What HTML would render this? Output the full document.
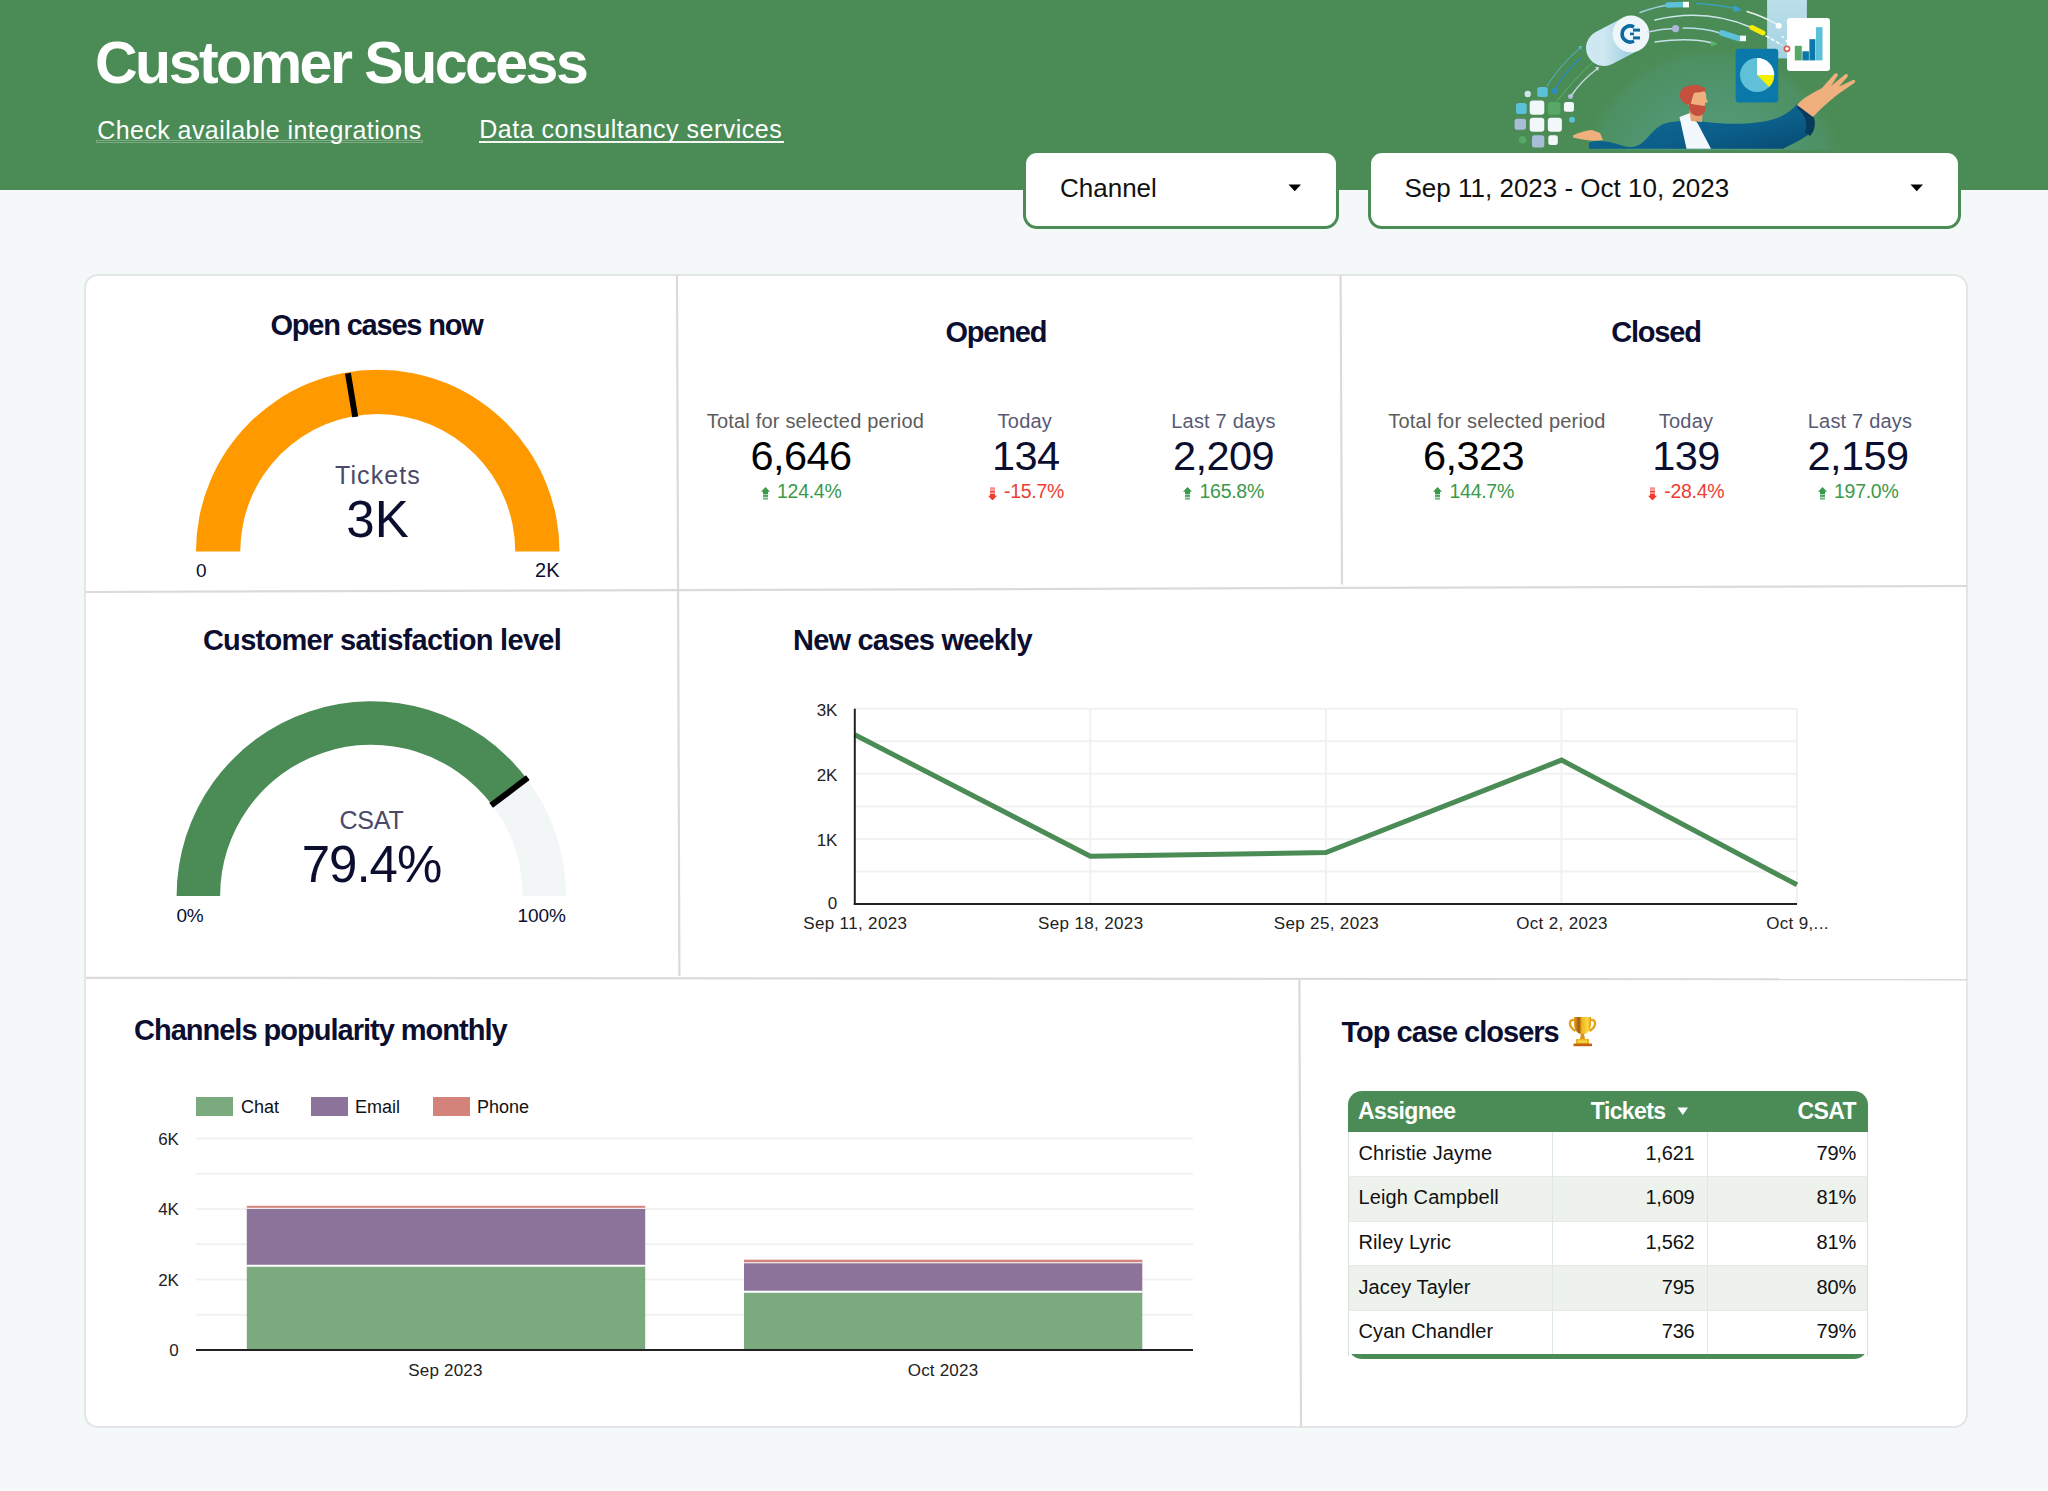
<!DOCTYPE html>
<html><head><meta charset="utf-8"><title>Customer Success</title>
<style>
html,body{margin:0;padding:0;}
body{width:2048px;height:1491px;position:relative;overflow:hidden;background:#f5f8f9;font-family:"Liberation Sans", sans-serif;}
.t{position:absolute;white-space:nowrap;line-height:1;}
</style></head><body>
<div style="position:absolute;left:0;top:0;width:2048px;height:190px;background:#4b8c56"></div>
<div class="t" style="left:95.0px;top:34.3px;font-size:59px;font-weight:700;color:#fff;letter-spacing:-2.5px;">Customer Success</div>
<div class="t" style="left:97.3px;top:117.6px;font-size:25px;color:#fff;letter-spacing:0.42px;">Check available integrations</div>
<div style="position:absolute;left:96px;top:139.8px;width:327px;height:3px;box-sizing:border-box;border:1px solid rgba(255,255,255,0.28)"></div>
<div class="t" style="left:479.3px;top:117.4px;font-size:25px;color:#fff;letter-spacing:0.5px;">Data consultancy services</div>
<div style="position:absolute;left:479px;top:140.5px;width:305px;height:2px;background:#f4f6f4"></div>
<svg style="position:absolute;left:0;top:0" width="2048" height="190" viewBox="0 0 2048 190">
<defs>
<radialGradient id="glow" cx="0.5" cy="0.5" r="0.5">
<stop offset="0" stop-color="#58a383" stop-opacity="0.95"/>
<stop offset="0.6" stop-color="#52997a" stop-opacity="0.7"/>
<stop offset="0.9" stop-color="#4f9470" stop-opacity="0.45"/>
<stop offset="1" stop-color="#4b8c56" stop-opacity="0"/>
</radialGradient>
<linearGradient id="jk" x1="0" y1="0" x2="1" y2="1">
<stop offset="0" stop-color="#0f6d98"/><stop offset="0.6" stop-color="#0b5f8a"/><stop offset="1" stop-color="#084a72"/>
</linearGradient>
<linearGradient id="cyl" x1="0" y1="0" x2="1" y2="0">
<stop offset="0" stop-color="#cfe7f0"/><stop offset="1" stop-color="#a6d3e3"/>
</linearGradient>
<linearGradient id="tall" x1="0" y1="0" x2="0" y2="1">
<stop offset="0" stop-color="#bde0ea"/><stop offset="1" stop-color="#a3d2e2"/>
</linearGradient>
</defs>
<circle cx="1712" cy="178" r="134" fill="url(#glow)"/>
<!-- squares -->
<g>
<circle cx="1527.7" cy="94" r="3.2" fill="#cfe3ea"/>
<rect x="1537.2" y="87" width="10.6" height="10" rx="2.5" fill="#5bc0d8"/>
<circle cx="1554.8" cy="91" r="3" fill="#2a8cc0"/>
<circle cx="1570.4" cy="96.6" r="2.5" fill="#aab8d6"/>
<rect x="1516" y="103" width="10.7" height="11" rx="2.5" fill="#5bc0d8"/>
<rect x="1529.7" y="100.6" width="14.6" height="14.1" rx="3" fill="#f2f7f9"/>
<rect x="1547.8" y="102" width="12.6" height="12.7" rx="3" fill="#57a866"/>
<rect x="1563.9" y="102" width="10.1" height="9.7" rx="2.5" fill="#f2f7f9"/>
<rect x="1514.6" y="118.7" width="11.4" height="11.1" rx="2.5" fill="#a9bcd8"/>
<rect x="1529.7" y="117.7" width="14.6" height="14.1" rx="3" fill="#f2f7f9"/>
<rect x="1547.8" y="117.7" width="14.1" height="14.1" rx="3" fill="#f2f7f9"/>
<circle cx="1572" cy="119.7" r="3" fill="#5bc0d8"/>
<circle cx="1522.6" cy="139.8" r="3.8" fill="#57a866"/>
<rect x="1532" y="135.3" width="12.3" height="12.1" rx="2.5" fill="#a9bcd8"/>
<rect x="1548.3" y="135.3" width="9.5" height="9.6" rx="2.5" fill="#f2f7f9"/>
</g>
<!-- left arcs -->
<g fill="none" stroke-linecap="round">
<path d="M1547 86 Q1560 65 1580 48" stroke="#5ab5c8" stroke-width="1"/>
<path d="M1556 88 Q1566 70 1581 58" stroke="#2a8cc0" stroke-width="1.5"/>
<path d="M1557 101 Q1575 78 1596 59" stroke="#5db36a" stroke-width="1"/>
<path d="M1571 96 Q1582 80 1597 69" stroke="#c8d6e0" stroke-width="1.5"/>
</g>
<path d="M1578 46 L1582 46 L1581 50 Z" fill="#5ab5c8"/>
<path d="M1595 67 L1599 67 L1598 71 Z" fill="#c8d6e0"/>
<!-- cylinder -->
<line x1="1604" y1="48" x2="1627" y2="36" stroke="url(#cyl)" stroke-width="36" stroke-linecap="round"/>
<circle cx="1631" cy="34" r="18.4" fill="#eef6f9"/>
<path d="M1634 27 A8 8 0 1 0 1634 41" fill="none" stroke="#0a6aa1" stroke-width="3.6"/>
<rect x="1633" y="28.6" width="7" height="3" fill="#0a6aa1"/>
<rect x="1633" y="36.4" width="7" height="3" fill="#0a6aa1"/>
<rect x="1630" y="32.6" width="4" height="2.6" fill="#0a6aa1"/>
<!-- tall light rect -->
<rect x="1767.1" y="-3" width="39.8" height="61.4" fill="url(#tall)"/>
<!-- right flow lines -->
<g fill="none" stroke-linecap="round">
<path d="M1640 12.5 Q1655 7 1668 5" stroke="#9fd0e0" stroke-width="1.5"/>
<path d="M1697 3.5 Q1720 5 1738 9" stroke="#3aa0c8" stroke-width="1.5" stroke-dasharray="3 1.5"/>
<path d="M1655 20 Q1705 8 1750 27" stroke="#d0e6ee" stroke-width="1.5"/>
<path d="M1766 36 L1782 45" stroke="#ffffff" stroke-width="1.5" stroke-dasharray="3 3"/>
<path d="M1648 32 Q1662 29 1674 28.6" stroke="#c0d8e4" stroke-width="1.5"/>
<path d="M1683 28 Q1705 28 1720 33" stroke="#b8dce8" stroke-width="1.5"/>
<path d="M1655 42 Q1690 37 1712 43" stroke="#c6e3ec" stroke-width="1.5"/>
<path d="M1747 11.5 Q1765 17 1778 25" stroke="#e8f2f4" stroke-width="1.5"/>
</g>
<line x1="1668" y1="5" x2="1683" y2="4.5" stroke="#5bc0d8" stroke-width="5.5" stroke-linecap="round"/>
<rect x="1683" y="1.8" width="6" height="5.6" fill="#fff"/>
<path d="M1734 5 L1742 10 L1733 12 Z" fill="#3aa0c8"/>
<line x1="1752" y1="27.5" x2="1763" y2="33" stroke="#f5ef00" stroke-width="5" stroke-linecap="round"/>
<circle cx="1675.6" cy="28.6" r="3.6" fill="#aab8d6"/>
<line x1="1722" y1="33" x2="1739" y2="38.5" stroke="#5bc0d8" stroke-width="6" stroke-linecap="round"/>
<rect x="1740" y="35.6" width="6" height="5.6" fill="#f2f7f9"/>
<path d="M1711 40.5 L1718 44 L1711 46.5 Z" fill="#5db36a"/>
<circle cx="1778.7" cy="25.7" r="3" fill="#fff"/>
<path d="M1782 36 L1790 45" stroke="#ffffff" stroke-width="1.5" stroke-dasharray="2.5 3"/>
<!-- bar card -->
<rect x="1787" y="17.9" width="43" height="53" rx="3" fill="#fff"/>
<rect x="1794.8" y="45.8" width="7" height="14.6" fill="#57a866"/>
<rect x="1802.4" y="51.3" width="6.5" height="9.1" fill="#0a78a8"/>
<rect x="1809.4" y="39.2" width="6" height="21.2" fill="#0a78a8"/>
<rect x="1816" y="27.2" width="6.5" height="33.2" fill="#5bc0d8"/>
<circle cx="1787" cy="48.8" r="2.6" fill="#fff" stroke="#e05a4a" stroke-width="1.6"/>
<!-- pie card -->
<rect x="1735.7" y="48.8" width="42.5" height="53.8" rx="3" fill="#0a78a8"/>
<circle cx="1757.1" cy="75" r="17.1" fill="#5fc0d8"/>
<path d="M1757.1 75 L1757.1 57.9 A17.1 17.1 0 0 1 1774.2 75 Z" fill="#fff"/>
<path d="M1757.1 75 L1774.2 75 A17.1 17.1 0 0 1 1769.2 87.1 Z" fill="#f5ef00"/>
<!-- man -->
<path d="M1573 135.5 C1580 132 1586 130.5 1592 130 L1600 133 L1603 140 C1595 141.5 1584 140.5 1573 137.5 Z" fill="#f0b07e"/>
<path d="M1589 142.5 C1598 139.5 1610 141.5 1622 145.5 C1629 147.8 1636 147.8 1642 143 C1650 136 1655 127 1665 123.5 C1675 120.5 1692 120 1706 122 C1730 125 1760 125 1781 116.5 C1788 113 1794 108 1797 104 L1812 114 C1816 121 1815 129 1809 134 C1800 141 1790 145 1783 148.8 L1589 148.8 Z" fill="url(#jk)"/>
<path d="M1799 103.5 C1806 108 1812 112 1814 118 C1816 125 1814 132 1810 136 L1805 132 C1808 125 1806 115 1797 108 Z" fill="#083a5c"/>
<path d="M1797 105 C1805 96 1815 92 1822 88 L1834 74.5 C1836 72.5 1838.5 73 1837.5 76 L1831 86 L1845 74.5 C1847 73 1849 75 1847 77.5 L1839 86.5 L1853 80 C1855.5 79.5 1856 82 1853.5 83.5 C1841 92 1829 100 1813 117 Z" fill="#f0b07e"/>
<path d="M1679.5 117 L1690 113 L1698 124 L1711 148.8 L1686.5 148.8 Z" fill="#f2f8fb"/>
<path d="M1689 109 L1703 109 L1702 122 L1691 121 Z" fill="#e4a273"/>
<path d="M1687 97 C1688 90 1694 88 1700 89 C1705 90 1707 94 1706 98 L1708 102 L1705 103 C1705 108 1702 112 1697 112 C1691 112 1686 104 1687 96 Z" fill="#f0b07e"/>
<path d="M1680 97 C1679 90 1684 86 1691 85.5 C1695 84 1700 85 1702 87 C1705 87 1706 89 1705 91 C1702 92 1698 92.5 1694 93 C1693 96 1692 99 1690.5 105 C1686 105 1681 102 1680 97 Z" fill="#c4503d"/>
<path d="M1689 103 C1693 105 1699 104.5 1705.5 106.5 C1706 111 1704 115.5 1698 116 C1692 116 1688 111 1689 103 Z" fill="#c4503d"/>
<circle cx="1701" cy="126" r="1.1" fill="#0a6aa1"/>
</svg>

<div style="position:absolute;left:1023px;top:149.5px;width:316px;height:79px;box-sizing:border-box;border:3px solid #4b8c56;border-radius:14px;background:#fff"></div>
<div class="t" style="left:1060.0px;top:175.3px;font-size:26px;color:#111;">Channel</div>
<svg style="position:absolute;left:1288px;top:184px" width="14" height="8"><path d="M0.5 0.5 H13 L6.75 7.2 Z" fill="#000"/></svg>
<div style="position:absolute;left:1368px;top:149.5px;width:593px;height:79px;box-sizing:border-box;border:3px solid #4b8c56;border-radius:14px;background:#fff"></div>
<div class="t" style="left:1404.5px;top:175.3px;font-size:26px;color:#111;">Sep 11, 2023 - Oct 10, 2023</div>
<svg style="position:absolute;left:1910px;top:184px" width="14" height="8"><path d="M0.5 0.5 H13 L6.75 7.2 Z" fill="#000"/></svg>
<div style="position:absolute;left:84px;top:274px;width:1884px;height:1154px;box-sizing:border-box;border:2px solid #e3e5e6;border-radius:14px;background:#fff"></div>
<svg style="position:absolute;left:0;top:0" width="2048" height="1491"><g stroke="#dadada" stroke-width="2.2"><line x1="677" y1="275" x2="679.4" y2="976"/><line x1="1340.6" y1="275" x2="1342" y2="584.5"/><line x1="86" y1="592" x2="1967" y2="586"/><line x1="86" y1="977.8" x2="1967" y2="979.4"/><line x1="1299.4" y1="979" x2="1301" y2="1427"/></g></svg>
<svg style="position:absolute;left:0;top:0" width="700" height="600"><path d="M196.00 551.50 A181.75 181.75 0 0 1 559.50 551.50 L515.25 551.50 A137.5 137.5 0 0 0 240.25 551.50 Z" fill="#ff9900"/><line x1="355.22" y1="416.87" x2="347.92" y2="373.23" stroke="#000" stroke-width="6"/></svg>
<div class="t" style="left:-223.5px;width:1200px;text-align:center;top:311.1px;font-size:29px;font-weight:700;color:#0b0e2f;letter-spacing:-1.2px;">Open cases now</div>
<div class="t" style="left:-222.0px;width:1200px;text-align:center;top:462.8px;font-size:25px;color:#4a4a68;letter-spacing:1.1px;">Tickets</div>
<div class="t" style="left:-222.5px;width:1200px;text-align:center;top:493.6px;font-size:51px;color:#0b0e2f;">3K</div>
<div class="t" style="left:196.0px;top:560.7px;font-size:19px;color:#0b0e2f;">0</div>
<div class="t" style="left:-640.5px;width:1200px;text-align:right;top:559.9px;font-size:20px;color:#0b0e2f;">2K</div>
<div class="t" style="left:395.8px;width:1200px;text-align:center;top:317.6px;font-size:29px;font-weight:700;color:#0b0e2f;letter-spacing:-1.2px;">Opened</div>
<div class="t" style="left:215.4px;width:1200px;text-align:center;top:411.3px;font-size:20px;color:#5c5c5c;letter-spacing:0.2px;">Total for selected period</div>
<div class="t" style="left:201.0px;width:1200px;text-align:center;top:435.3px;font-size:41.5px;color:#000;letter-spacing:-0.6px;">6,646</div>
<div class="t" style="left:201px;width:1200px;text-align:center;top:482.0px;font-size:19.5px;color:#3a9a4a;letter-spacing:-0.3px"><svg width="9" height="13.6" style="vertical-align:-2.2px;fill:#3a9a4a"><path d="M4.5 0 L9 4.8 H7 V6.9 H2 V4.8 H0 Z"/><rect x="2" y="6.9" width="5" height="1.20" fill-opacity="0.4"/><rect x="2" y="8.1" width="5" height="1.70" fill-opacity="1.0"/><rect x="2" y="9.8" width="5" height="1.30" fill-opacity="0.3"/><rect x="2" y="11.1" width="5" height="1.10" fill-opacity="0.8"/><rect x="2" y="12.2" width="5" height="1.40" fill-opacity="0.4"/></svg><span style="margin-left:7.5px">124.4%</span></div>
<div class="t" style="left:424.8px;width:1200px;text-align:center;top:411.3px;font-size:20px;color:#575a74;letter-spacing:0.2px;">Today</div>
<div class="t" style="left:425.8px;width:1200px;text-align:center;top:435.3px;font-size:41.5px;color:#0b0e2f;letter-spacing:-0.6px;">134</div>
<div class="t" style="left:425.79999999999995px;width:1200px;text-align:center;top:482.0px;font-size:19.5px;color:#ee3d31;letter-spacing:-0.3px"><svg width="9" height="13.6" style="vertical-align:-2.2px;fill:#ee3d31"><g transform="translate(0,13.6) scale(1,-1)"><path d="M4.5 0 L9 4.8 H7 V6.9 H2 V4.8 H0 Z"/><rect x="2" y="6.9" width="5" height="1.20" fill-opacity="0.4"/><rect x="2" y="8.1" width="5" height="1.70" fill-opacity="1.0"/><rect x="2" y="9.8" width="5" height="1.30" fill-opacity="0.3"/><rect x="2" y="11.1" width="5" height="1.10" fill-opacity="0.8"/><rect x="2" y="12.2" width="5" height="1.40" fill-opacity="0.4"/></g></svg><span style="margin-left:7.5px">-15.7%</span></div>
<div class="t" style="left:623.5px;width:1200px;text-align:center;top:411.3px;font-size:20px;color:#575a74;letter-spacing:0.2px;">Last 7 days</div>
<div class="t" style="left:623.5px;width:1200px;text-align:center;top:435.3px;font-size:41.5px;color:#0b0e2f;letter-spacing:-0.6px;">2,209</div>
<div class="t" style="left:623.5px;width:1200px;text-align:center;top:482.0px;font-size:19.5px;color:#3a9a4a;letter-spacing:-0.3px"><svg width="9" height="13.6" style="vertical-align:-2.2px;fill:#3a9a4a"><path d="M4.5 0 L9 4.8 H7 V6.9 H2 V4.8 H0 Z"/><rect x="2" y="6.9" width="5" height="1.20" fill-opacity="0.4"/><rect x="2" y="8.1" width="5" height="1.70" fill-opacity="1.0"/><rect x="2" y="9.8" width="5" height="1.30" fill-opacity="0.3"/><rect x="2" y="11.1" width="5" height="1.10" fill-opacity="0.8"/><rect x="2" y="12.2" width="5" height="1.40" fill-opacity="0.4"/></svg><span style="margin-left:7.5px">165.8%</span></div>
<div class="t" style="left:1056.0px;width:1200px;text-align:center;top:317.6px;font-size:29px;font-weight:700;color:#0b0e2f;letter-spacing:-1.2px;">Closed</div>
<div class="t" style="left:897.0px;width:1200px;text-align:center;top:411.3px;font-size:20px;color:#5c5c5c;letter-spacing:0.2px;">Total for selected period</div>
<div class="t" style="left:873.5px;width:1200px;text-align:center;top:435.3px;font-size:41.5px;color:#000;letter-spacing:-0.6px;">6,323</div>
<div class="t" style="left:873.5px;width:1200px;text-align:center;top:482.0px;font-size:19.5px;color:#3a9a4a;letter-spacing:-0.3px"><svg width="9" height="13.6" style="vertical-align:-2.2px;fill:#3a9a4a"><path d="M4.5 0 L9 4.8 H7 V6.9 H2 V4.8 H0 Z"/><rect x="2" y="6.9" width="5" height="1.20" fill-opacity="0.4"/><rect x="2" y="8.1" width="5" height="1.70" fill-opacity="1.0"/><rect x="2" y="9.8" width="5" height="1.30" fill-opacity="0.3"/><rect x="2" y="11.1" width="5" height="1.10" fill-opacity="0.8"/><rect x="2" y="12.2" width="5" height="1.40" fill-opacity="0.4"/></svg><span style="margin-left:7.5px">144.7%</span></div>
<div class="t" style="left:1086.0px;width:1200px;text-align:center;top:411.3px;font-size:20px;color:#575a74;letter-spacing:0.2px;">Today</div>
<div class="t" style="left:1086.0px;width:1200px;text-align:center;top:435.3px;font-size:41.5px;color:#0b0e2f;letter-spacing:-0.6px;">139</div>
<div class="t" style="left:1086px;width:1200px;text-align:center;top:482.0px;font-size:19.5px;color:#ee3d31;letter-spacing:-0.3px"><svg width="9" height="13.6" style="vertical-align:-2.2px;fill:#ee3d31"><g transform="translate(0,13.6) scale(1,-1)"><path d="M4.5 0 L9 4.8 H7 V6.9 H2 V4.8 H0 Z"/><rect x="2" y="6.9" width="5" height="1.20" fill-opacity="0.4"/><rect x="2" y="8.1" width="5" height="1.70" fill-opacity="1.0"/><rect x="2" y="9.8" width="5" height="1.30" fill-opacity="0.3"/><rect x="2" y="11.1" width="5" height="1.10" fill-opacity="0.8"/><rect x="2" y="12.2" width="5" height="1.40" fill-opacity="0.4"/></g></svg><span style="margin-left:7.5px">-28.4%</span></div>
<div class="t" style="left:1260.0px;width:1200px;text-align:center;top:411.3px;font-size:20px;color:#575a74;letter-spacing:0.2px;">Last 7 days</div>
<div class="t" style="left:1258.0px;width:1200px;text-align:center;top:435.3px;font-size:41.5px;color:#0b0e2f;letter-spacing:-0.6px;">2,159</div>
<div class="t" style="left:1258px;width:1200px;text-align:center;top:482.0px;font-size:19.5px;color:#3a9a4a;letter-spacing:-0.3px"><svg width="9" height="13.6" style="vertical-align:-2.2px;fill:#3a9a4a"><path d="M4.5 0 L9 4.8 H7 V6.9 H2 V4.8 H0 Z"/><rect x="2" y="6.9" width="5" height="1.20" fill-opacity="0.4"/><rect x="2" y="8.1" width="5" height="1.70" fill-opacity="1.0"/><rect x="2" y="9.8" width="5" height="1.30" fill-opacity="0.3"/><rect x="2" y="11.1" width="5" height="1.10" fill-opacity="0.8"/><rect x="2" y="12.2" width="5" height="1.40" fill-opacity="0.4"/></svg><span style="margin-left:7.5px">197.0%</span></div>
<svg style="position:absolute;left:0;top:0" width="700" height="1000"><path d="M176.60 896.00 A194.7 194.7 0 0 1 526.63 778.61 L491.93 804.84 A151.2 151.2 0 0 0 220.10 896.00 Z" fill="#4b8c56"/><path d="M526.63 778.61 A194.7 194.7 0 0 1 566.00 896.00 L522.50 896.00 A151.2 151.2 0 0 0 491.93 804.84 Z" fill="#f3f6f7"/><line x1="491.13" y1="805.44" x2="527.83" y2="777.71" stroke="#000" stroke-width="6"/></svg>
<div class="t" style="left:-218.0px;width:1200px;text-align:center;top:626.4px;font-size:29px;font-weight:700;color:#0b0e2f;letter-spacing:-0.7px;">Customer satisfaction level</div>
<div class="t" style="left:-228.5px;width:1200px;text-align:center;top:807.8px;font-size:25px;color:#4a4a68;letter-spacing:-0.2px;">CSAT</div>
<div class="t" style="left:-228.5px;width:1200px;text-align:center;top:838.6px;font-size:51px;color:#0b0e2f;letter-spacing:-1.0px;">79.4%</div>
<div class="t" style="left:176.5px;top:905.9px;font-size:19px;color:#0b0e2f;letter-spacing:-0.3px;">0%</div>
<div class="t" style="left:-634.0px;width:1200px;text-align:right;top:905.9px;font-size:19px;color:#0b0e2f;">100%</div>
<svg style="position:absolute;left:0;top:0" width="2048" height="1000"><line x1="854.8" y1="871.5" x2="1797" y2="871.5" stroke="#f1f1f1" stroke-width="2"/><line x1="854.8" y1="838.9" x2="1797" y2="838.9" stroke="#f1f1f1" stroke-width="2"/><line x1="854.8" y1="806.4" x2="1797" y2="806.4" stroke="#f1f1f1" stroke-width="2"/><line x1="854.8" y1="773.8" x2="1797" y2="773.8" stroke="#f1f1f1" stroke-width="2"/><line x1="854.8" y1="741.2" x2="1797" y2="741.2" stroke="#f1f1f1" stroke-width="2"/><line x1="854.8" y1="708.7" x2="1797" y2="708.7" stroke="#f1f1f1" stroke-width="2"/><line x1="1090.3" y1="708.7" x2="1090.3" y2="904" stroke="#f1f1f1" stroke-width="2"/><line x1="1325.9" y1="708.7" x2="1325.9" y2="904" stroke="#f1f1f1" stroke-width="2"/><line x1="1561.5" y1="708.7" x2="1561.5" y2="904" stroke="#f1f1f1" stroke-width="2"/><line x1="1797.0" y1="708.7" x2="1797.0" y2="904" stroke="#f1f1f1" stroke-width="2"/><polyline points="854.8,734.7 1090.3,856.2 1325.9,852.6 1561.5,760.1 1797.0,884.8" fill="none" stroke="#4b8c56" stroke-width="5" stroke-linejoin="miter"/><line x1="854.8" y1="708.7" x2="854.8" y2="905" stroke="#222" stroke-width="2"/><line x1="853.8" y1="904" x2="1797" y2="904" stroke="#222" stroke-width="2"/></svg>
<div class="t" style="left:793.0px;top:625.7px;font-size:29px;font-weight:700;color:#0b0e2f;letter-spacing:-0.8px;">New cases weekly</div>
<div class="t" style="left:-363.0px;width:1200px;text-align:right;top:701.6px;font-size:17px;color:#222;letter-spacing:-0.3px;">3K</div>
<div class="t" style="left:-363.0px;width:1200px;text-align:right;top:766.6px;font-size:17px;color:#222;letter-spacing:-0.3px;">2K</div>
<div class="t" style="left:-363.0px;width:1200px;text-align:right;top:831.6px;font-size:17px;color:#222;letter-spacing:-0.3px;">1K</div>
<div class="t" style="left:-363.0px;width:1200px;text-align:right;top:894.6px;font-size:17px;color:#222;letter-spacing:-0.3px;">0</div>
<div class="t" style="left:255.3px;width:1200px;text-align:center;top:915.0px;font-size:17px;color:#222;letter-spacing:0.35px;">Sep 11, 2023</div>
<div class="t" style="left:490.8px;width:1200px;text-align:center;top:915.0px;font-size:17px;color:#222;letter-spacing:0.35px;">Sep 18, 2023</div>
<div class="t" style="left:726.4px;width:1200px;text-align:center;top:915.0px;font-size:17px;color:#222;letter-spacing:0.35px;">Sep 25, 2023</div>
<div class="t" style="left:962.0px;width:1200px;text-align:center;top:915.0px;font-size:17px;color:#222;letter-spacing:0.35px;">Oct 2, 2023</div>
<div class="t" style="left:1197.5px;width:1200px;text-align:center;top:915.0px;font-size:17px;color:#222;letter-spacing:0.35px;">Oct 9,...</div>
<div class="t" style="left:134.0px;top:1015.8px;font-size:29px;font-weight:700;color:#0b0e2f;letter-spacing:-1.0px;">Channels popularity monthly</div>
<div style="position:absolute;left:195.8px;top:1097.3px;width:37.6px;height:18.3px;background:#7baa7f"></div>
<div class="t" style="left:241.0px;top:1097.6px;font-size:18px;color:#111;">Chat</div>
<div style="position:absolute;left:310.8px;top:1097.3px;width:37.6px;height:18.3px;background:#8c7399"></div>
<div class="t" style="left:355.0px;top:1097.6px;font-size:18px;color:#111;">Email</div>
<div style="position:absolute;left:432.6px;top:1097.3px;width:37.6px;height:18.3px;background:#d4837a"></div>
<div class="t" style="left:477.0px;top:1097.6px;font-size:18px;color:#111;">Phone</div>
<svg style="position:absolute;left:0;top:0" width="2048" height="1491"><line x1="196" y1="1314.8" x2="1193" y2="1314.8" stroke="#f1f1f1" stroke-width="2"/><line x1="196" y1="1279.5" x2="1193" y2="1279.5" stroke="#f1f1f1" stroke-width="2"/><line x1="196" y1="1244.3" x2="1193" y2="1244.3" stroke="#f1f1f1" stroke-width="2"/><line x1="196" y1="1209.1" x2="1193" y2="1209.1" stroke="#f1f1f1" stroke-width="2"/><line x1="196" y1="1173.8" x2="1193" y2="1173.8" stroke="#f1f1f1" stroke-width="2"/><line x1="196" y1="1138.6" x2="1193" y2="1138.6" stroke="#f1f1f1" stroke-width="2"/><rect x="246.8" y="1205.8" width="398.40000000000003" height="2.5" fill="#d4837a"/><rect x="246.8" y="1208.3" width="398.40000000000003" height="57.5" fill="#8c7399"/><rect x="246.8" y="1265.8" width="398.40000000000003" height="84.2" fill="#7baa7f"/><line x1="246.8" y1="1265.8" x2="645.2" y2="1265.8" stroke="#fff" stroke-width="2"/><line x1="246.8" y1="1208.3" x2="645.2" y2="1208.3" stroke="#fff" stroke-width="1"/><rect x="744" y="1259.7" width="398.29999999999995" height="3.1" fill="#d4837a"/><rect x="744" y="1262.8" width="398.29999999999995" height="29.0" fill="#8c7399"/><rect x="744" y="1291.8" width="398.29999999999995" height="58.2" fill="#7baa7f"/><line x1="744" y1="1291.8" x2="1142.3" y2="1291.8" stroke="#fff" stroke-width="2"/><line x1="744" y1="1262.8" x2="1142.3" y2="1262.8" stroke="#fff" stroke-width="1"/><line x1="196" y1="1350" x2="1193" y2="1350" stroke="#222" stroke-width="2"/></svg>
<div class="t" style="left:-1021.5px;width:1200px;text-align:right;top:1130.6px;font-size:17px;color:#222;letter-spacing:-0.3px;">6K</div>
<div class="t" style="left:-1021.5px;width:1200px;text-align:right;top:1201.1px;font-size:17px;color:#222;letter-spacing:-0.3px;">4K</div>
<div class="t" style="left:-1021.5px;width:1200px;text-align:right;top:1271.6px;font-size:17px;color:#222;letter-spacing:-0.3px;">2K</div>
<div class="t" style="left:-1021.5px;width:1200px;text-align:right;top:1342.1px;font-size:17px;color:#222;letter-spacing:-0.3px;">0</div>
<div class="t" style="left:-154.6px;width:1200px;text-align:center;top:1362.2px;font-size:17px;color:#222;letter-spacing:0.2px;">Sep 2023</div>
<div class="t" style="left:343.0px;width:1200px;text-align:center;top:1362.2px;font-size:17px;color:#222;letter-spacing:0.2px;">Oct 2023</div>
<div class="t" style="left:1341.5px;top:1018.2px;font-size:29px;font-weight:700;color:#0b0e2f;letter-spacing:-1.0px;">Top case closers</div>
<svg style="position:absolute;left:1566px;top:1014px" width="32" height="34" viewBox="0 0 32 34"><defs><linearGradient id="tg" x1="0" x2="1"><stop offset="0" stop-color="#e8a318"/><stop offset="0.3" stop-color="#9a5a10"/><stop offset="0.45" stop-color="#f0b020"/><stop offset="0.8" stop-color="#fadb3a"/><stop offset="1" stop-color="#e09a18"/></linearGradient></defs><path d="M8.5 6 C2 5 2.5 13 9.5 17" fill="none" stroke="#e6a21a" stroke-width="2.4"/><path d="M24.5 6 C31 5 30.5 13 23.5 17" fill="none" stroke="#e6a21a" stroke-width="2.4"/><path d="M8 3 H25 V10 C25 16.5 21 20 16.5 20.5 C12 20 8 16.5 8 10 Z" fill="url(#tg)"/><path d="M15 20 H18 L19 25 H14 Z" fill="#d89515"/><rect x="10" y="25" width="13" height="5" fill="#eab425"/><rect x="12" y="26.5" width="9" height="2" fill="#f8d84a"/><rect x="7.5" y="29.6" width="18.5" height="2.6" fill="#c2620f"/></svg>
<div style="position:absolute;left:1348px;top:1091px;width:520px;height:268px;border-radius:14px;overflow:hidden;background:#fff"><div style="position:absolute;left:0;top:0;width:100%;height:41px;background:#4b8c56"></div><div style="position:absolute;left:0;top:41.0px;width:100%;height:44.6px;background:#fff"></div><div style="position:absolute;left:0;top:85.6px;width:100%;height:44.6px;background:#edf2ec"></div><div style="position:absolute;left:0;top:130.2px;width:100%;height:44.6px;background:#fff"></div><div style="position:absolute;left:0;top:174.8px;width:100%;height:44.6px;background:#edf2ec"></div><div style="position:absolute;left:0;top:219.4px;width:100%;height:44.6px;background:#fff"></div><div style="position:absolute;left:0;top:263px;width:100%;height:5px;background:#4b8c56"></div></div>
<div style="position:absolute;left:1348px;top:1132px;width:1px;height:224px;background:#d5e3d6"></div>
<div style="position:absolute;left:1867px;top:1132px;width:1px;height:224px;background:#d5e3d6"></div>
<div style="position:absolute;left:1552px;top:1132px;width:1px;height:222px;background:#dde8de"></div>
<div style="position:absolute;left:1707px;top:1132px;width:1px;height:222px;background:#dde8de"></div>
<div style="position:absolute;left:1348px;top:1176px;width:520px;height:1px;background:#e3ebe3"></div>
<div style="position:absolute;left:1348px;top:1221px;width:520px;height:1px;background:#e3ebe3"></div>
<div style="position:absolute;left:1348px;top:1265px;width:520px;height:1px;background:#e3ebe3"></div>
<div style="position:absolute;left:1348px;top:1310px;width:520px;height:1px;background:#e3ebe3"></div>
<div class="t" style="left:1358.0px;top:1099.7px;font-size:23px;font-weight:700;color:#fff;letter-spacing:-0.6px;">Assignee</div>
<div class="t" style="left:465.5px;width:1200px;text-align:right;top:1099.7px;font-size:23px;font-weight:700;color:#fff;letter-spacing:-0.6px;">Tickets</div>
<svg style="position:absolute;left:1677px;top:1107px" width="12" height="9"><path d="M0.5 0.5 H11 L5.75 8 Z" fill="#fff"/></svg>
<div class="t" style="left:656.0px;width:1200px;text-align:right;top:1099.7px;font-size:23px;font-weight:700;color:#fff;letter-spacing:-0.6px;">CSAT</div>
<div class="t" style="left:1358.5px;top:1142.8px;font-size:20px;color:#111;letter-spacing:0.1px;">Christie Jayme</div>
<div class="t" style="left:494.5px;width:1200px;text-align:right;top:1142.8px;font-size:20px;color:#111;letter-spacing:-0.2px;">1,621</div>
<div class="t" style="left:656.0px;width:1200px;text-align:right;top:1142.8px;font-size:20px;color:#111;letter-spacing:-0.2px;">79%</div>
<div class="t" style="left:1358.5px;top:1187.4px;font-size:20px;color:#111;letter-spacing:0.1px;">Leigh Campbell</div>
<div class="t" style="left:494.5px;width:1200px;text-align:right;top:1187.4px;font-size:20px;color:#111;letter-spacing:-0.2px;">1,609</div>
<div class="t" style="left:656.0px;width:1200px;text-align:right;top:1187.4px;font-size:20px;color:#111;letter-spacing:-0.2px;">81%</div>
<div class="t" style="left:1358.5px;top:1232.0px;font-size:20px;color:#111;letter-spacing:0.1px;">Riley Lyric</div>
<div class="t" style="left:494.5px;width:1200px;text-align:right;top:1232.0px;font-size:20px;color:#111;letter-spacing:-0.2px;">1,562</div>
<div class="t" style="left:656.0px;width:1200px;text-align:right;top:1232.0px;font-size:20px;color:#111;letter-spacing:-0.2px;">81%</div>
<div class="t" style="left:1358.5px;top:1276.6px;font-size:20px;color:#111;letter-spacing:0.1px;">Jacey Tayler</div>
<div class="t" style="left:494.5px;width:1200px;text-align:right;top:1276.6px;font-size:20px;color:#111;letter-spacing:-0.2px;">795</div>
<div class="t" style="left:656.0px;width:1200px;text-align:right;top:1276.6px;font-size:20px;color:#111;letter-spacing:-0.2px;">80%</div>
<div class="t" style="left:1358.5px;top:1321.2px;font-size:20px;color:#111;letter-spacing:0.1px;">Cyan Chandler</div>
<div class="t" style="left:494.5px;width:1200px;text-align:right;top:1321.2px;font-size:20px;color:#111;letter-spacing:-0.2px;">736</div>
<div class="t" style="left:656.0px;width:1200px;text-align:right;top:1321.2px;font-size:20px;color:#111;letter-spacing:-0.2px;">79%</div>
</body></html>
